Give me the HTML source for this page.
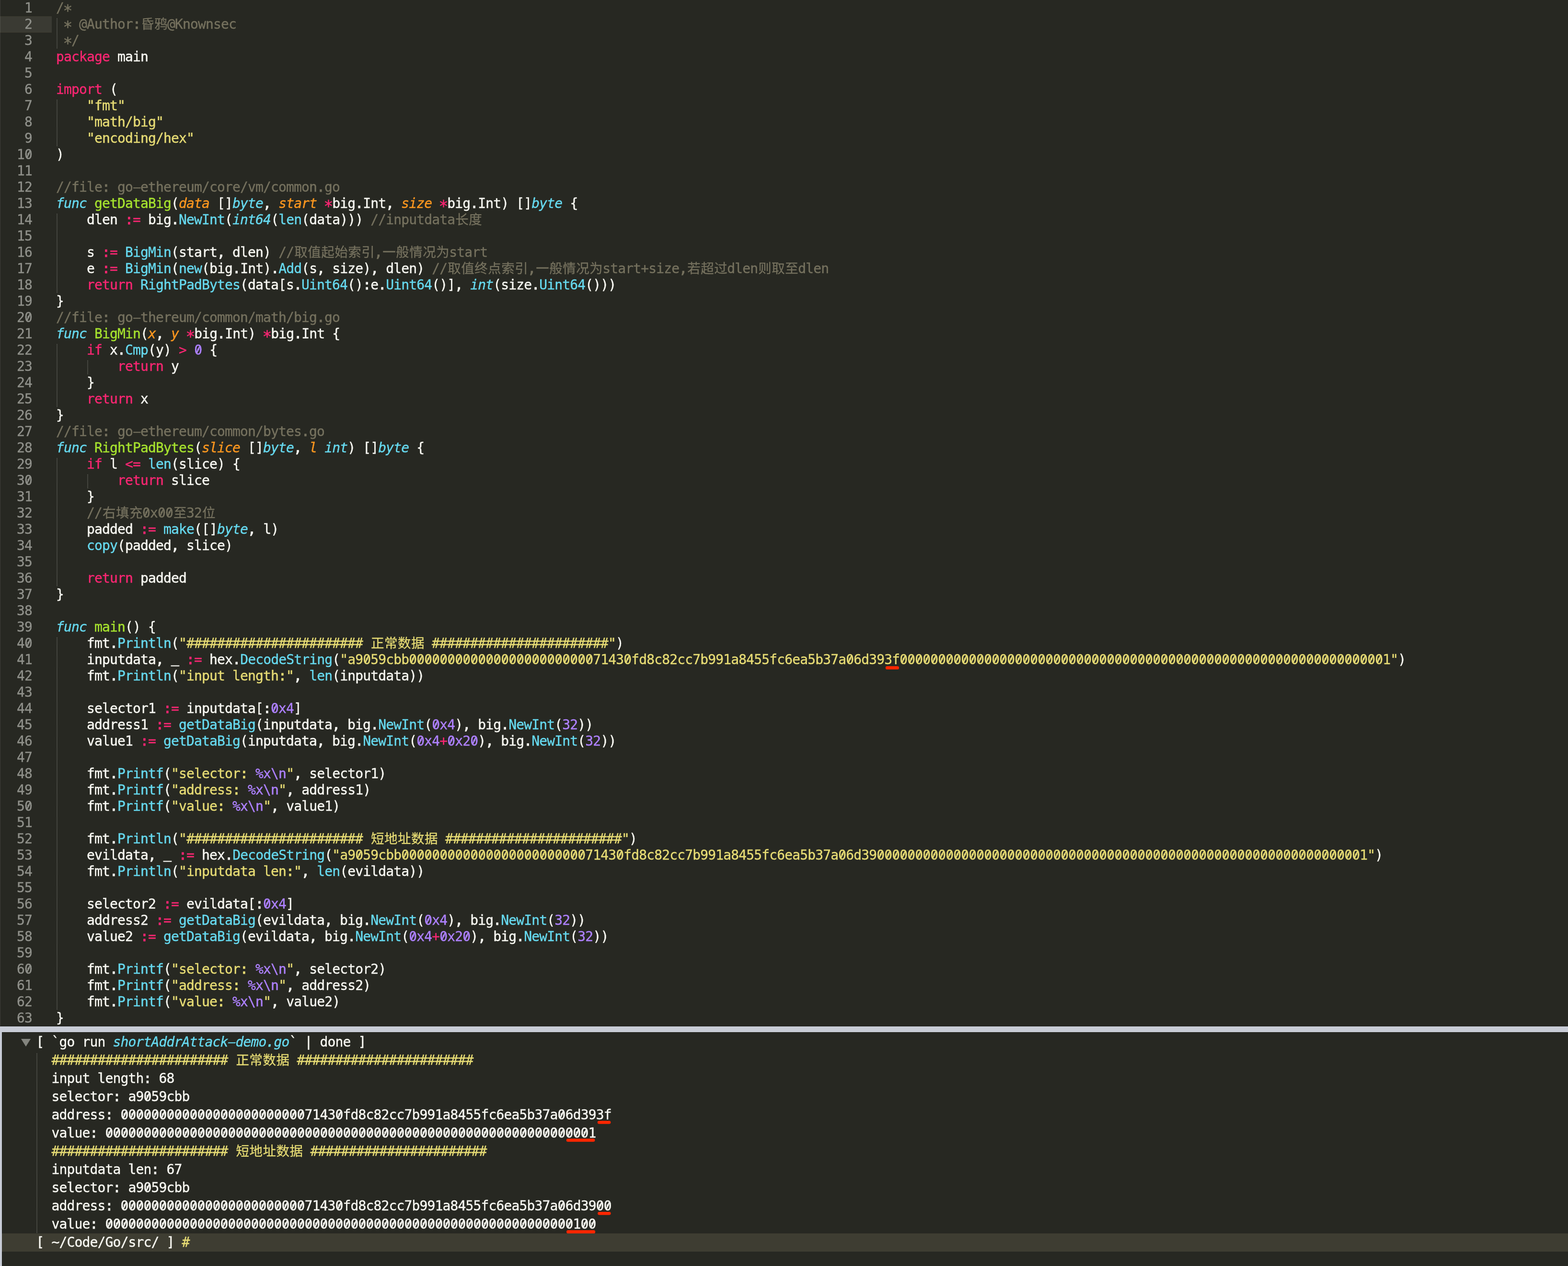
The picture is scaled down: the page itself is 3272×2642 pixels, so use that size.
<!DOCTYPE html>
<html lang="zh"><head><meta charset="utf-8"><title>shortAddrAttack-demo.go</title>
<style>
html,body{margin:0;padding:0;background:#272822;}
body{width:3272px;height:2642px;overflow:hidden;position:relative;
 font-family:"DejaVu Sans Mono","Liberation Mono","Noto Sans CJK SC",monospace;
 font-size:28px;letter-spacing:-0.857px;color:#f8f8f2;
 -webkit-text-stroke:0.38px;font-variant-ligatures:none;font-kerning:none;-webkit-font-smoothing:antialiased;}
#ed{position:absolute;left:0;top:0;width:3272px;height:2142px;overflow:hidden;background:#272822;}
.l{position:relative;height:34px;line-height:34px;white-space:pre;}
.n{position:absolute;left:0;top:0;width:67px;text-align:right;color:#8f908a;}
.hl .n{background:#3a3a33;box-shadow:inset 0 1px 0 #3d3c31,inset 0 -1px 0 #3d3c31;width:67px;padding-right:41px;box-sizing:content-box;left:0;}
.t{position:absolute;left:117px;top:0;}
#ed,#pn{will-change:transform;}
.ig{position:absolute;top:0;width:2px;height:34px;
 background-image:repeating-linear-gradient(to bottom,#5e5f58 0,#5e5f58 1px,transparent 1px,transparent 2px);}
.ig.f{top:4px;height:30px}
em{font-style:inherit}
em.a{display:inline-block;position:relative;top:5.5px;transform:scale(1.18)}
em.d{position:relative;top:-0.5px;-webkit-text-stroke:1px}
em.u{position:relative;top:-3.5px;-webkit-text-stroke:0.9px}
em.h{display:inline-block;transform:scale(2.05,0.82)}
em.zr{background:linear-gradient(115.6deg,transparent calc(50% - 1.8px),currentColor calc(50% - 1.05px),currentColor calc(50% + 1.05px),transparent calc(50% + 1.8px)) 0.43px 9px/16px 14px repeat-x;}
.k{color:#f92672}.s{color:#e6db74}.c{color:#75715e}.b{color:#66d9ef}
.bi{color:#66d9ef;font-style:italic}.g{color:#a6e22e}.o{color:#fd971f;font-style:italic}.p{color:#ae81ff}
u.z{text-decoration:none;line-height:0;letter-spacing:0.5px;font-size:27.5px;position:relative;left:1px;-webkit-text-stroke:0.3px;font-family:"Noto Sans CJK SC","WenQuanYi Zen Hei",sans-serif;}
#bar{position:absolute;left:0;top:2141px;width:3272px;height:13px;background:#c8ccd6;border-top:1px solid #1e1f1b;box-sizing:border-box;}
#ls{position:absolute;left:0;top:0;width:1px;height:2141px;background:rgba(255,255,255,0.1);}
#ov{position:absolute;left:0;top:0;pointer-events:none;}
#pn{position:absolute;left:0;top:2154px;width:3272px;height:488px;background:#272822;border-left:4px solid #c8ccd6;box-sizing:border-box;box-shadow:inset 1px 0 0 #1f201b,inset 0 1px 0 #1f201b;}
.pl{position:relative;height:38px;line-height:38px;white-space:pre;}
#pn .t{left:71.5px;}
.hl2{background:#3e3d32;}
#pl0{height:2px}
#tri{position:absolute;left:40px;top:14px;width:0;height:0;border-left:10px solid transparent;border-right:10px solid transparent;border-top:16px solid #84857f;}
#pg{position:absolute;left:72px;top:44px;width:2px;height:375px;
 background-image:repeating-linear-gradient(to bottom,#5e5f58 0,#5e5f58 1px,transparent 1px,transparent 2px);}
</style></head>
<body>
<div id=ed>
<div class="l"><span class=n>1</span><span class=t><span class=c>/<em class=a>*</em></span></span></div>
<div class="l hl"><span class=n>2</span><b class="ig f" style="left:118px"></b><span class=t><span class=c> <em class=a>*</em> @Author<em class=d>:</em><u class=z>昏鸦</u>@Knownsec</span></span></div>
<div class="l"><span class=n>3</span><b class="ig" style="left:118px"></b><span class=t><span class=c> <em class=a>*</em>/</span></span></div>
<div class="l"><span class=n>4</span><span class=t><span class=k>package</span> main</span></div>
<div class="l"><span class=n>5</span><span class=t></span></div>
<div class="l"><span class=n>6</span><span class=t><span class=k>import</span> (</span></div>
<div class="l"><span class=n>7</span><b class="ig f" style="left:118px"></b><span class=t>    <span class=s>"fmt"</span></span></div>
<div class="l"><span class=n>8</span><b class="ig" style="left:118px"></b><span class=t>    <span class=s>"math/big"</span></span></div>
<div class="l"><span class=n>9</span><b class="ig" style="left:118px"></b><span class=t>    <span class=s>"encoding/hex"</span></span></div>
<div class="l"><span class=n>1<em class=zr>0</em></span><span class=t>)</span></div>
<div class="l"><span class=n>11</span><span class=t></span></div>
<div class="l"><span class=n>12</span><span class=t><span class=c>//file<em class=d>:</em> go<em class=h>-</em>ethereum/core/vm/common<em class=d>.</em>go</span></span></div>
<div class="l"><span class=n>13</span><span class=t><span class=bi>func</span> <span class=g>getDataBig</span>(<span class=o>data</span> []<span class=bi>byte</span><em class=d>,</em> <span class=o>start</span> <span class=k><em class=a>*</em></span>big<em class=d>.</em>Int<em class=d>,</em> <span class=o>size</span> <span class=k><em class=a>*</em></span>big<em class=d>.</em>Int) []<span class=bi>byte</span> {</span></div>
<div class="l"><span class=n>14</span><b class="ig f" style="left:118px"></b><span class=t>    dlen <span class=k><em class=d>:</em>=</span> big<em class=d>.</em><span class=b>NewInt</span>(<span class=bi>int64</span>(<span class=b>len</span>(data))) <span class=c>//inputdata<u class=z>长度</u></span></span></div>
<div class="l"><span class=n>15</span><b class="ig" style="left:118px"></b><span class=t></span></div>
<div class="l"><span class=n>16</span><b class="ig" style="left:118px"></b><span class=t>    s <span class=k><em class=d>:</em>=</span> <span class=b>BigMin</span>(start<em class=d>,</em> dlen) <span class=c>//<u class=z>取值起始索引</u><em class=d>,</em><u class=z>一般情况为</u>start</span></span></div>
<div class="l"><span class=n>17</span><b class="ig" style="left:118px"></b><span class=t>    e <span class=k><em class=d>:</em>=</span> <span class=b>BigMin</span>(<span class=b>new</span>(big<em class=d>.</em>Int)<em class=d>.</em><span class=b>Add</span>(s<em class=d>,</em> size)<em class=d>,</em> dlen) <span class=c>//<u class=z>取值终点索引</u><em class=d>,</em><u class=z>一般情况为</u>start+size<em class=d>,</em><u class=z>若超过</u>dlen<u class=z>则取至</u>dlen</span></span></div>
<div class="l"><span class=n>18</span><b class="ig" style="left:118px"></b><span class=t>    <span class=k>return</span> <span class=b>RightPadBytes</span>(data[s<em class=d>.</em><span class=b>Uint64</span>()<em class=d>:</em>e<em class=d>.</em><span class=b>Uint64</span>()]<em class=d>,</em> <span class=bi>int</span>(size<em class=d>.</em><span class=b>Uint64</span>()))</span></div>
<div class="l"><span class=n>19</span><span class=t>}</span></div>
<div class="l"><span class=n>2<em class=zr>0</em></span><span class=t><span class=c>//file<em class=d>:</em> go<em class=h>-</em>thereum/common/math/big<em class=d>.</em>go</span></span></div>
<div class="l"><span class=n>21</span><span class=t><span class=bi>func</span> <span class=g>BigMin</span>(<span class=o>x</span><em class=d>,</em> <span class=o>y</span> <span class=k><em class=a>*</em></span>big<em class=d>.</em>Int) <span class=k><em class=a>*</em></span>big<em class=d>.</em>Int {</span></div>
<div class="l"><span class=n>22</span><b class="ig f" style="left:118px"></b><span class=t>    <span class=k>if</span> x<em class=d>.</em><span class=b>Cmp</span>(y) <span class=k>&gt;</span> <span class=p><em class=zr>0</em></span> {</span></div>
<div class="l"><span class=n>23</span><b class="ig" style="left:118px"></b><b class="ig f" style="left:182px"></b><span class=t>        <span class=k>return</span> y</span></div>
<div class="l"><span class=n>24</span><b class="ig" style="left:118px"></b><span class=t>    }</span></div>
<div class="l"><span class=n>25</span><b class="ig" style="left:118px"></b><span class=t>    <span class=k>return</span> x</span></div>
<div class="l"><span class=n>26</span><span class=t>}</span></div>
<div class="l"><span class=n>27</span><span class=t><span class=c>//file<em class=d>:</em> go<em class=h>-</em>ethereum/common/bytes<em class=d>.</em>go</span></span></div>
<div class="l"><span class=n>28</span><span class=t><span class=bi>func</span> <span class=g>RightPadBytes</span>(<span class=o>slice</span> []<span class=bi>byte</span><em class=d>,</em> <span class=o>l</span> <span class=bi>int</span>) []<span class=bi>byte</span> {</span></div>
<div class="l"><span class=n>29</span><b class="ig f" style="left:118px"></b><span class=t>    <span class=k>if</span> l <span class=k>&lt;=</span> <span class=b>len</span>(slice) {</span></div>
<div class="l"><span class=n>3<em class=zr>0</em></span><b class="ig" style="left:118px"></b><b class="ig f" style="left:182px"></b><span class=t>        <span class=k>return</span> slice</span></div>
<div class="l"><span class=n>31</span><b class="ig" style="left:118px"></b><span class=t>    }</span></div>
<div class="l"><span class=n>32</span><b class="ig" style="left:118px"></b><span class=t>    <span class=c>//<u class=z>右填充</u><em class=zr>0</em>x<em class=zr>00</em><u class=z>至</u>32<u class=z>位</u></span></span></div>
<div class="l"><span class=n>33</span><b class="ig" style="left:118px"></b><span class=t>    padded <span class=k><em class=d>:</em>=</span> <span class=b>make</span>([]<span class=bi>byte</span><em class=d>,</em> l)</span></div>
<div class="l"><span class=n>34</span><b class="ig" style="left:118px"></b><span class=t>    <span class=b>copy</span>(padded<em class=d>,</em> slice)</span></div>
<div class="l"><span class=n>35</span><b class="ig" style="left:118px"></b><span class=t></span></div>
<div class="l"><span class=n>36</span><b class="ig" style="left:118px"></b><span class=t>    <span class=k>return</span> padded</span></div>
<div class="l"><span class=n>37</span><span class=t>}</span></div>
<div class="l"><span class=n>38</span><span class=t></span></div>
<div class="l"><span class=n>39</span><span class=t><span class=bi>func</span> <span class=g>main</span>() {</span></div>
<div class="l"><span class=n>4<em class=zr>0</em></span><b class="ig f" style="left:118px"></b><span class=t>    fmt<em class=d>.</em><span class=b>Println</span>(<span class=s>"####################### <u class=z>正常数据</u> #######################"</span>)</span></div>
<div class="l"><span class=n>41</span><b class="ig" style="left:118px"></b><span class=t>    inputdata<em class=d>,</em> <em class=u>_</em> <span class=k><em class=d>:</em>=</span> hex<em class=d>.</em><span class=b>DecodeString</span>(<span class=s>"a9<em class=zr>0</em>59cbb<em class=zr>000000000000000000000000</em>7143<em class=zr>0</em>fd8c82cc7b991a8455fc6ea5b37a<em class=zr>0</em>6d393f<em class=zr>000000000000000000000000000000000000000000000000000000000000000</em>1"</span>)</span></div>
<div class="l"><span class=n>42</span><b class="ig" style="left:118px"></b><span class=t>    fmt<em class=d>.</em><span class=b>Println</span>(<span class=s>"input length<em class=d>:</em>"</span><em class=d>,</em> <span class=b>len</span>(inputdata))</span></div>
<div class="l"><span class=n>43</span><b class="ig" style="left:118px"></b><span class=t></span></div>
<div class="l"><span class=n>44</span><b class="ig" style="left:118px"></b><span class=t>    selector1 <span class=k><em class=d>:</em>=</span> inputdata[<em class=d>:</em><span class=p><em class=zr>0</em>x4</span>]</span></div>
<div class="l"><span class=n>45</span><b class="ig" style="left:118px"></b><span class=t>    address1 <span class=k><em class=d>:</em>=</span> <span class=b>getDataBig</span>(inputdata<em class=d>,</em> big<em class=d>.</em><span class=b>NewInt</span>(<span class=p><em class=zr>0</em>x4</span>)<em class=d>,</em> big<em class=d>.</em><span class=b>NewInt</span>(<span class=p>32</span>))</span></div>
<div class="l"><span class=n>46</span><b class="ig" style="left:118px"></b><span class=t>    value1 <span class=k><em class=d>:</em>=</span> <span class=b>getDataBig</span>(inputdata<em class=d>,</em> big<em class=d>.</em><span class=b>NewInt</span>(<span class=p><em class=zr>0</em>x4</span><span class=k>+</span><span class=p><em class=zr>0</em>x2<em class=zr>0</em></span>)<em class=d>,</em> big<em class=d>.</em><span class=b>NewInt</span>(<span class=p>32</span>))</span></div>
<div class="l"><span class=n>47</span><b class="ig" style="left:118px"></b><span class=t></span></div>
<div class="l"><span class=n>48</span><b class="ig" style="left:118px"></b><span class=t>    fmt<em class=d>.</em><span class=b>Printf</span>(<span class=s>"selector<em class=d>:</em> <span class=p>%x\n</span>"</span><em class=d>,</em> selector1)</span></div>
<div class="l"><span class=n>49</span><b class="ig" style="left:118px"></b><span class=t>    fmt<em class=d>.</em><span class=b>Printf</span>(<span class=s>"address<em class=d>:</em> <span class=p>%x\n</span>"</span><em class=d>,</em> address1)</span></div>
<div class="l"><span class=n>5<em class=zr>0</em></span><b class="ig" style="left:118px"></b><span class=t>    fmt<em class=d>.</em><span class=b>Printf</span>(<span class=s>"value<em class=d>:</em> <span class=p>%x\n</span>"</span><em class=d>,</em> value1)</span></div>
<div class="l"><span class=n>51</span><b class="ig" style="left:118px"></b><span class=t></span></div>
<div class="l"><span class=n>52</span><b class="ig" style="left:118px"></b><span class=t>    fmt<em class=d>.</em><span class=b>Println</span>(<span class=s>"####################### <u class=z>短地址数据</u> #######################"</span>)</span></div>
<div class="l"><span class=n>53</span><b class="ig" style="left:118px"></b><span class=t>    evildata<em class=d>,</em> <em class=u>_</em> <span class=k><em class=d>:</em>=</span> hex<em class=d>.</em><span class=b>DecodeString</span>(<span class=s>"a9<em class=zr>0</em>59cbb<em class=zr>000000000000000000000000</em>7143<em class=zr>0</em>fd8c82cc7b991a8455fc6ea5b37a<em class=zr>0</em>6d39<em class=zr>000000000000000000000000000000000000000000000000000000000000000</em>1"</span>)</span></div>
<div class="l"><span class=n>54</span><b class="ig" style="left:118px"></b><span class=t>    fmt<em class=d>.</em><span class=b>Println</span>(<span class=s>"inputdata len<em class=d>:</em>"</span><em class=d>,</em> <span class=b>len</span>(evildata))</span></div>
<div class="l"><span class=n>55</span><b class="ig" style="left:118px"></b><span class=t></span></div>
<div class="l"><span class=n>56</span><b class="ig" style="left:118px"></b><span class=t>    selector2 <span class=k><em class=d>:</em>=</span> evildata[<em class=d>:</em><span class=p><em class=zr>0</em>x4</span>]</span></div>
<div class="l"><span class=n>57</span><b class="ig" style="left:118px"></b><span class=t>    address2 <span class=k><em class=d>:</em>=</span> <span class=b>getDataBig</span>(evildata<em class=d>,</em> big<em class=d>.</em><span class=b>NewInt</span>(<span class=p><em class=zr>0</em>x4</span>)<em class=d>,</em> big<em class=d>.</em><span class=b>NewInt</span>(<span class=p>32</span>))</span></div>
<div class="l"><span class=n>58</span><b class="ig" style="left:118px"></b><span class=t>    value2 <span class=k><em class=d>:</em>=</span> <span class=b>getDataBig</span>(evildata<em class=d>,</em> big<em class=d>.</em><span class=b>NewInt</span>(<span class=p><em class=zr>0</em>x4</span><span class=k>+</span><span class=p><em class=zr>0</em>x2<em class=zr>0</em></span>)<em class=d>,</em> big<em class=d>.</em><span class=b>NewInt</span>(<span class=p>32</span>))</span></div>
<div class="l"><span class=n>59</span><b class="ig" style="left:118px"></b><span class=t></span></div>
<div class="l"><span class=n>6<em class=zr>0</em></span><b class="ig" style="left:118px"></b><span class=t>    fmt<em class=d>.</em><span class=b>Printf</span>(<span class=s>"selector<em class=d>:</em> <span class=p>%x\n</span>"</span><em class=d>,</em> selector2)</span></div>
<div class="l"><span class=n>61</span><b class="ig" style="left:118px"></b><span class=t>    fmt<em class=d>.</em><span class=b>Printf</span>(<span class=s>"address<em class=d>:</em> <span class=p>%x\n</span>"</span><em class=d>,</em> address2)</span></div>
<div class="l"><span class=n>62</span><b class="ig" style="left:118px"></b><span class=t>    fmt<em class=d>.</em><span class=b>Printf</span>(<span class=s>"value<em class=d>:</em> <span class=p>%x\n</span>"</span><em class=d>,</em> value2)</span></div>
<div class="l"><span class=n>63</span><span class=t>}</span></div>
</div>
<div id=bar></div><div id=ls></div>
<div id=pn><div id=pl0></div><i id=tri></i><b id=pg></b>
<div class="pl"><span class=t>[ `go run <span class=bi>shortAddrAttack<em class=h>-</em>demo<em class=d>.</em>go</span>` | done ]</span></div>
<div class="pl"><span class=t>  <span class=s>####################### <u class=z>正常数据</u> #######################</span></span></div>
<div class="pl"><span class=t>  input length<em class=d>:</em> 68</span></div>
<div class="pl"><span class=t>  selector<em class=d>:</em> a9<em class=zr>0</em>59cbb</span></div>
<div class="pl"><span class=t>  address<em class=d>:</em> <em class=zr>000000000000000000000000</em>7143<em class=zr>0</em>fd8c82cc7b991a8455fc6ea5b37a<em class=zr>0</em>6d393f</span></div>
<div class="pl"><span class=t>  value<em class=d>:</em> <em class=zr>000000000000000000000000000000000000000000000000000000000000000</em>1</span></div>
<div class="pl"><span class=t>  <span class=s>####################### <u class=z>短地址数据</u> #######################</span></span></div>
<div class="pl"><span class=t>  inputdata len<em class=d>:</em> 67</span></div>
<div class="pl"><span class=t>  selector<em class=d>:</em> a9<em class=zr>0</em>59cbb</span></div>
<div class="pl"><span class=t>  address<em class=d>:</em> <em class=zr>000000000000000000000000</em>7143<em class=zr>0</em>fd8c82cc7b991a8455fc6ea5b37a<em class=zr>0</em>6d39<em class=zr>00</em></span></div>
<div class="pl"><span class=t>  value<em class=d>:</em> <em class=zr>0000000000000000000000000000000000000000000000000000000000000</em>1<em class=zr>00</em></span></div>
<div class="pl hl2"><span class=t>[ ~/Code/Go/src/ ] <span class=s>#</span></span></div>
</div>
<svg id=ov width="3272" height="2642" viewBox="0 0 3272 2642"><g fill="#ff2600"><rect x="1847.9" y="1390.3" width="28.1" height="6.7" rx="3.35"/><rect x="1246.9" y="2339.1" width="27.5" height="6.5" rx="3.25"/><rect x="1181.8" y="2376.3" width="59.6" height="6.5" rx="3.25"/><rect x="1247.3" y="2529.1" width="27.3" height="6.5" rx="3.25"/><rect x="1182.1" y="2567.3" width="60.1" height="6.7" rx="3.35"/></g></svg>
</body></html>
